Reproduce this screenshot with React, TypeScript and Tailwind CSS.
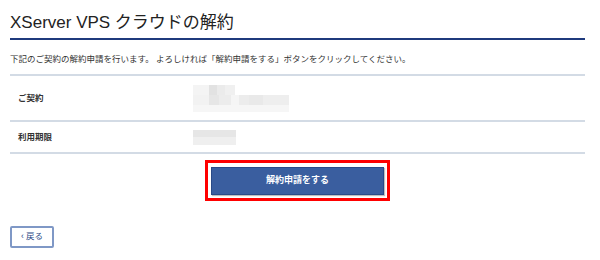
export default function App() {
  return (
    <div className="w-[600px] h-[260px] bg-white px-[10px] pr-[15px] font-['Liberation_Sans','Noto_Sans_CJK_JP',sans-serif] text-[#333]">
      <h1 className="pt-[12px] pb-[4px] text-[17px] leading-[22px] text-[#222] border-b-2 border-[#1f3a7d]">
        XServer VPS クラウドの解約
      </h1>
      <p className="mt-[13px] text-[8.5px] leading-[12px] text-[#333]">
        下記のご契約の解約申請を行います。 よろしければ「解約申請をする」ボタンをクリックしてください。
      </p>
      <div className="mt-[9px] border-t-2 border-[#d3dbe5]">
        <div className="flex items-center h-[46px] border-b-2 border-[#d3dbe5]">
          <div className="w-[183px] pl-[8px] text-[8.5px] font-bold">ご契約</div>
          <div className="flex flex-col">
            <div className="flex">
              <div className="w-[16px] h-[10px] bg-[#f4f4f4]" />
              <div className="w-[8px] h-[10px] bg-[#e2e2e2]" />
              <div className="w-[8px] h-[10px] bg-[#ebebeb]" />
              <div className="w-[10px] h-[10px] bg-[#f0f0f0]" />
            </div>
            <div className="flex">
              <div className="w-[16px] h-[10px] bg-[#f2f2f2]" />
              <div className="w-[10px] h-[10px] bg-[#e6e6e6]" />
              <div className="w-[12px] h-[10px] bg-[#ececec]" />
              <div className="w-[8px] h-[10px] bg-[#f5f5f5]" />
              <div className="w-[10px] h-[10px] bg-[#ececec]" />
              <div className="w-[14px] h-[10px] bg-[#e9e9e9]" />
              <div className="w-[26px] h-[10px] bg-[#eeeeee]" />
            </div>
            <div className="flex">
              <div className="w-[96px] h-[7px] bg-[#f6f6f6]" />
            </div>
          </div>
        </div>
        <div className="flex items-center h-[32px] border-b-2 border-[#d3dbe5]">
          <div className="w-[183px] pl-[8px] text-[8.5px] font-bold">利用期限</div>
          <div className="flex flex-col">
            <div className="w-[43px] h-[7px] bg-[#e6e6e6]" />
            <div className="w-[43px] h-[8px] bg-[#efefef]" />
          </div>
        </div>
      </div>
      <div className="flex justify-center mt-[6px]">
        <div className="border-[3px] border-[#ff0000] p-[3px]">
          <button className="w-[173px] h-[28px] bg-[#3a5e9f] border border-[#2a4a87] text-white text-[9px] font-bold shadow-[1px_1px_1px_rgba(0,0,0,0.25)]">
            解約申請をする
          </button>
        </div>
      </div>
      <div className="mt-[25px]">
        <button className="w-[44px] h-[22px] border-2 border-[#7f98c6] rounded-[2px] text-[8.5px] text-[#2d4a86] flex items-center justify-center">
          ‹ 戻る
        </button>
      </div>
    </div>
  );
}
